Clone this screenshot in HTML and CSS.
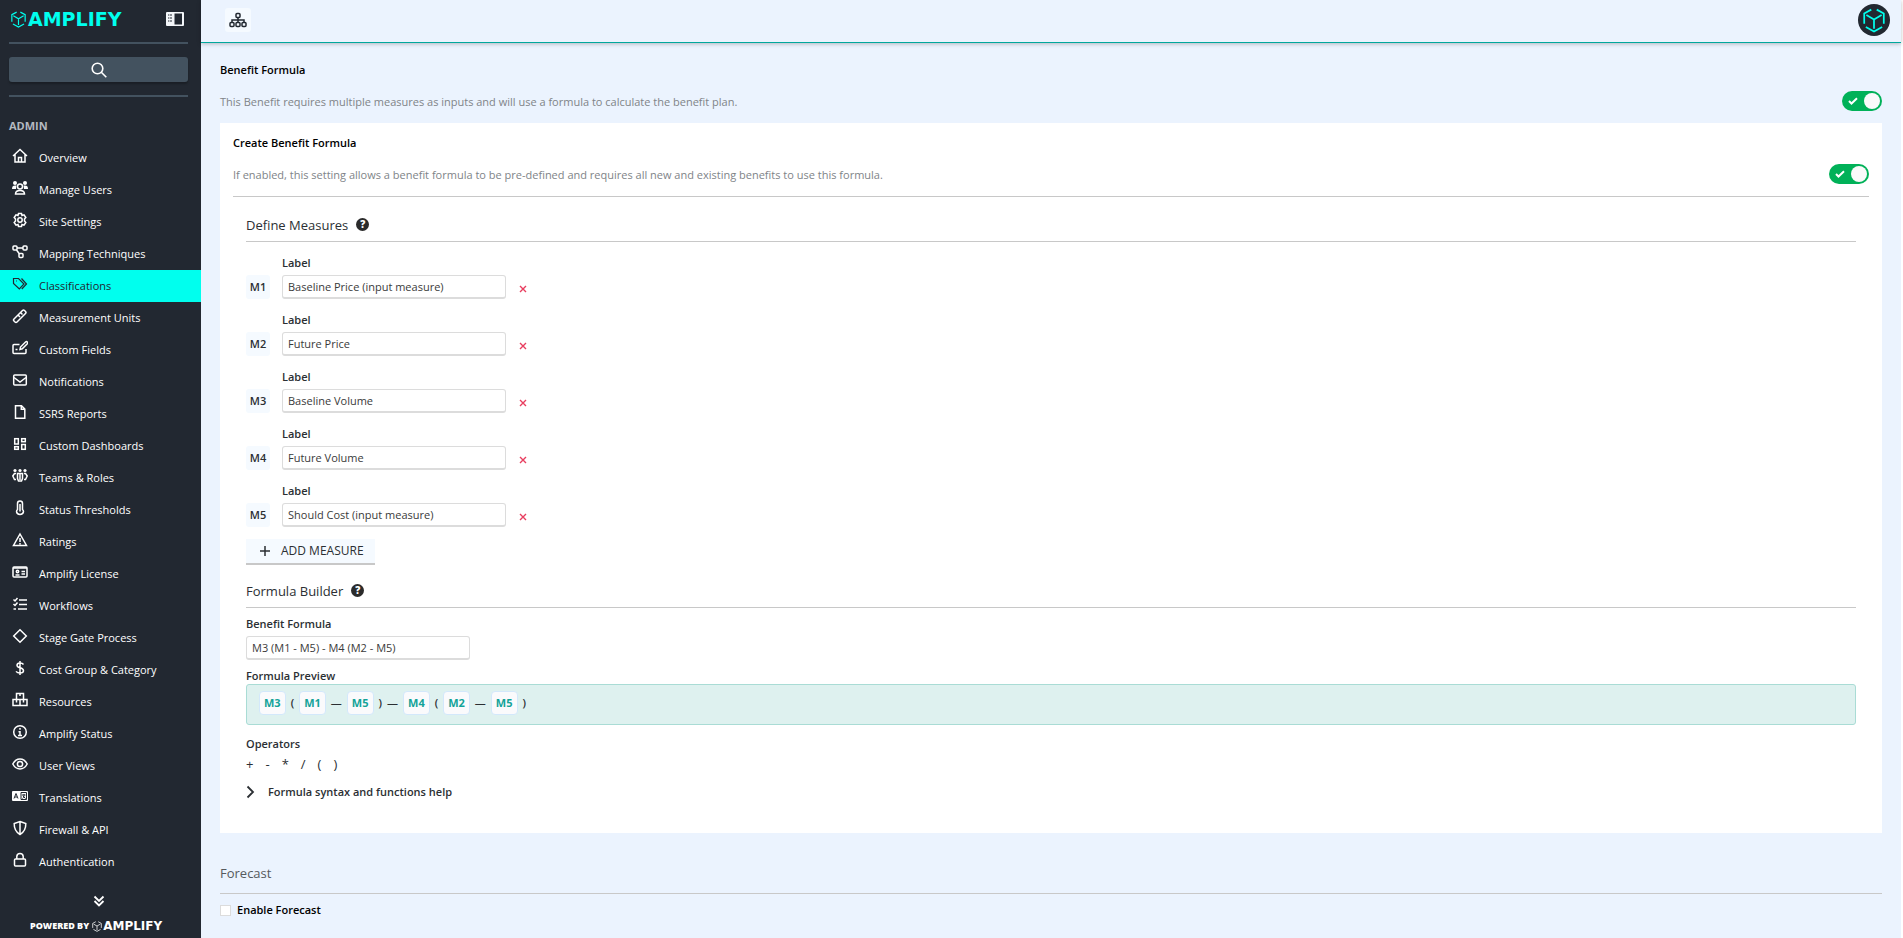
FILE: index.html
```html
<!DOCTYPE html>
<html lang="en">
<head>
  <meta charset="UTF-8">
  <meta name="viewport" content="width=device-width, initial-scale=1.0">
  <title>Amplify - Classifications</title>
  <link rel="stylesheet" href="styles.css">
</head>
<body>
  <!-- Shared cube logo -->
  <svg class="sprite" width="0" height="0" aria-hidden="true">
    <symbol id="cube" viewBox="2 1 20 23">
      <path d="M9.500 2.500L3 6v9.500M14.500 2.500L21 6v9.500M4.500 18.500L12 22.700l7.500-4.200M5 7.500l7 4 7-4M12 11.500V20" fill="none" stroke="currentColor" stroke-width="1.600"/>
    </symbol>
  </svg>

  <!-- Sidebar -->
  <aside class="sidebar">
    <div class="brand">
      <a href="#" class="logo"><svg class="logo-cube"><use href="#cube"/></svg>AMPLIFY</a>
      <button class="collapse" aria-label="Collapse menu">
        <svg width="18" height="14" viewBox="0 0 18 14"><rect width="18" height="14" rx="1" fill="#f4f7fa"/><rect x="8.500" y="1.500" width="7.500" height="11" fill="#222831"/><path d="M2 3h4M2 6h4M2 9h4" stroke="#222831" stroke-width="1.200" stroke-dasharray="1 .6 3"/></svg>
      </button>
    </div>
    <hr class="side-rule">
    <button class="search" aria-label="Search">
      <svg width="16" height="16" viewBox="0 0 16 16"><circle cx="6.500" cy="6.500" r="5.300"/><path d="M10.300 10.300l5 5"/></svg>
    </button>
    <hr class="side-rule">
    <h2 class="side-title">ADMIN</h2>
    <nav class="menu">
      <a href="#"><svg viewBox="0 0 16 16"><path d="M1 8l7-6.500L15 8M3 6.500V14h10V6.500M6.500 14v-4.500h3V14"/></svg>Overview</a>
      <a href="#"><svg viewBox="0 0 16 16"><g class="solid"><circle cx="3" cy="3" r="2"/><circle cx="13" cy="3" r="2"/><path d="M0 9c0-2.500 1-3.500 3-3.500h1.500L4 9zM16 9c0-2.500-1-3.500-3-3.500h-1.500L12 9z"/></g><circle cx="8" cy="6.500" r="2.500"/><path d="M3.500 14c0-2.500 1.500-3.500 4.500-3.500s4.500 1 4.500 3.500z"/></svg>Manage Users</a>
      <a href="#"><svg viewBox="0 0 16 16"><path d="M6.500 1.500h3l.5 2 2-.6 1.800 2.600L12.500 7v2l1.300 1.500L12 13.100l-2-.6-.5 2h-3l-.5-2-2 .6-1.800-2.600L3.500 9V7L2.200 5.500 4 2.900l2 .6z"/><circle cx="8" cy="8" r="2.200"/></svg>Site Settings</a>
      <a href="#"><svg viewBox="0 0 16 16"><rect x="1" y="2" width="4" height="4" rx="1"/><rect x="11" y="2" width="4" height="4" rx="1"/><rect x="7" y="9.500" width="4" height="4" rx="1"/><path d="M5 4h6M4.500 6l3 4"/></svg>Mapping Techniques</a>
      <a href="#" class="active"><svg viewBox="0 0 16 16"><path d="M1.500 2.500h5L12 8l-4.700 5L1.500 7.500zM9.500 2.500l5 5.500-4.700 5"/><path d="M4 5h.8"/></svg>Classifications</a>
      <a href="#"><svg viewBox="0 0 16 16"><path d="M2 11l8.500-8.500q1-1 2 0l1 1q1 1 0 2L5 14q-1 1-2 0l-1-1q-1-1 0-2zM6.500 7.500L8 9M9 5l1.500 1.500"/></svg>Measurement Units</a>
      <a href="#"><svg viewBox="0 0 16 16"><path d="M7.500 4.500H2q-1 0-1 1v7q0 1 1 1h11q1 0 1-1V9M8 9.500L8.500 7l5-5q1-.8 1.800 0t0 1.800l-5 5zM3.500 9.500h2"/></svg>Custom Fields</a>
      <a href="#"><svg viewBox="0 0 16 16"><rect x="1.700" y="3" width="12.600" height="10" rx="1"/><path d="M2 5.500l6 4.500 6-4.500"/></svg>Notifications</a>
      <a href="#"><svg viewBox="0 0 16 16"><path d="M3.500 1.700h6l3.300 3.300v9.300H3.500zM9.300 2v3.300h3.300"/></svg>SSRS Reports</a>
      <a href="#"><svg viewBox="0 0 16 16"><rect x="2.700" y="2.700" width="3.600" height="5.300"/><rect x="9.700" y="2.700" width="3.600" height="3"/><rect x="2.700" y="10.700" width="3.600" height="2.600"/><rect x="9.700" y="8.500" width="3.600" height="4.800"/></svg>Custom Dashboards</a>
      <a href="#"><svg viewBox="0 0 16 16"><g class="solid"><circle cx="3" cy="2.500" r="1.600"/><circle cx="8" cy="2.500" r="1.600"/><circle cx="13" cy="2.500" r="1.600"/></g><path d="M4 5.500H2.500L.8 8l1.700 3.500H4M12 5.500h1.500L15.200 8l-1.700 3.500H12M5.500 5.500h5v5l-1 2.500h-3l-1-2.500zM8 6v6"/></svg>Teams &amp; Roles</a>
      <a href="#"><svg viewBox="0 0 16 16"><path d="M5.500 9.500v-6q0-2.500 2.500-2.500t2.500 2.500v6q1 1 1 2.200-.3 2.800-3.500 2.800t-3.500-2.800q0-1.200 1-2.200zM8 4v7.500"/></svg>Status Thresholds</a>
      <a href="#"><svg viewBox="0 0 16 16"><path d="M8 2l6.500 11.500h-13zM8 6v4M8 11v1.500"/></svg>Ratings</a>
      <a href="#"><svg viewBox="0 0 16 16"><rect x="1" y="3" width="14" height="10" rx="1"/><path d="M1 4h14M9.500 7.500h3.500M9.500 10h3.500M3.500 11h4"/><circle cx="5.500" cy="7.500" r="1.200"/></svg>Amplify License</a>
      <a href="#"><svg viewBox="0 0 16 16"><path d="M1.500 3.500L3 5l2.500-3M1.500 8L3 9.500l2.500-3M7 4h8M7 8.500h8M6 13h9M1.500 13H4"/></svg>Workflows</a>
      <a href="#"><svg viewBox="0 0 16 16"><path d="M8 1.700L14.300 8 8 14.300 1.700 8z"/></svg>Stage Gate Process</a>
      <a href="#"><svg viewBox="0 0 16 16"><path d="M8 1v14M11.500 4.500q-1-1.500-3.500-1.500-3 0-3 2.300 0 1.700 3 2.500 3.500.8 3.500 2.900Q11.500 13 8 13q-2.700 0-4-1.600"/></svg>Cost Group &amp; Category</a>
      <a href="#"><svg viewBox="0 0 16 16"><path d="M4.500 1.500h7v6h-7zM1 7.500h7v6H1zM8 7.500h7v6H8zM8 1.500V4M4.500 8v2.500M11.500 8v2.500"/></svg>Resources</a>
      <a href="#"><svg viewBox="0 0 16 16"><circle cx="8" cy="8" r="6.300"/><path d="M8 4v1.800M6.500 7.700H8v3.500M6 11.500h4"/></svg>Amplify Status</a>
      <a href="#"><svg viewBox="0 0 16 16"><path d="M.8 8Q3.500 3 8 3t7.200 5Q12.500 13 8 13T.8 8z"/><circle cx="8" cy="8" r="2.600"/></svg>User Views</a>
      <a href="#"><svg viewBox="0 0 16 16"><rect x="0" y="3" width="16" height="10" rx="1" class="solid"/><path class="cut" d="M2 10.500l2-5 2 5M3 9h2M9 4.500h5.500v7H9zM10 7h3.500M12 6v1.500q0 2-1.500 3M11 8l2.500 2.500"/></svg>Translations</a>
      <a href="#"><svg viewBox="0 0 16 16"><path d="M8 1.500l5.800 2Q14 11 8 14.500 2 11 2.200 3.500zM8 2v12"/></svg>Firewall &amp; API</a>
      <a href="#"><svg viewBox="0 0 16 16"><rect x="2.500" y="7" width="11" height="7" rx="1"/><path d="M4.800 7V4.500Q5 1.500 8 1.500t3.200 3V7"/></svg>Authentication</a>
    </nav>
    <button class="more" aria-label="Show more">
      <svg width="12" height="12" viewBox="0 0 12 12"><path d="M1.500 1.500L6 6l4.500-4.500M1.500 6L6 10.500 10.500 6"/></svg>
    </button>
    <div class="powered">POWERED BY <svg><use href="#cube"/></svg><span>AMPLIFY</span></div>
  </aside>

  <!-- Page -->
  <div class="page">
    <header class="topbar">
      <button class="tree" aria-label="Hierarchy">
        <svg width="18" height="16" viewBox="0 0 18 16"><rect x="7" y="1.500" width="4" height="4" rx="1"/><rect x="1" y="10.500" width="4" height="4" rx="1"/><rect x="7" y="10.500" width="4" height="4" rx="1"/><rect x="13" y="10.500" width="4" height="4" rx="1"/><path d="M9 5.500v5M3 10.500V8h12v2.500"/></svg>
      </button>
      <button class="avatar" aria-label="Account"><svg><use href="#cube"/></svg></button>
    </header>

    <main class="content">
      <h1 class="title">Benefit Formula</h1>
      <div class="setting">
        <label for="multi">This Benefit requires multiple measures as inputs and will use a formula to calculate the benefit plan.</label>
        <span class="switch"><input type="checkbox" id="multi" checked><svg viewBox="0 0 10 8"><path d="M1 4l2.500 2.500L9 1.300"/></svg></span>
      </div>

      <section class="panel">
        <h2 class="title">Create Benefit Formula</h2>
        <div class="setting ruled">
          <label for="predefine">If enabled, this setting allows a benefit formula to be pre-defined and requires all new and existing benefits to use this formula.</label>
          <span class="switch"><input type="checkbox" id="predefine" checked><svg viewBox="0 0 10 8"><path d="M1 4l2.500 2.500L9 1.300"/></svg></span>
        </div>

        <div class="inner">
          <!-- Measures -->
          <h3 class="heading">Define Measures <button class="help" aria-label="Help">?</button></h3>
          <div class="measures">
            <div class="measure">
              <span class="chip">M1</span>
              <div class="field"><label for="m1">Label</label><input type="text" id="m1" value="Baseline Price (input measure)"></div>
              <button class="remove" aria-label="Remove M1"><svg viewBox="0 0 8 8"><path d="M1 1l6 6M7 1L1 7"/></svg></button>
            </div>
            <div class="measure">
              <span class="chip">M2</span>
              <div class="field"><label for="m2">Label</label><input type="text" id="m2" value="Future Price"></div>
              <button class="remove" aria-label="Remove M2"><svg viewBox="0 0 8 8"><path d="M1 1l6 6M7 1L1 7"/></svg></button>
            </div>
            <div class="measure">
              <span class="chip">M3</span>
              <div class="field"><label for="m3">Label</label><input type="text" id="m3" value="Baseline Volume"></div>
              <button class="remove" aria-label="Remove M3"><svg viewBox="0 0 8 8"><path d="M1 1l6 6M7 1L1 7"/></svg></button>
            </div>
            <div class="measure">
              <span class="chip">M4</span>
              <div class="field"><label for="m4">Label</label><input type="text" id="m4" value="Future Volume"></div>
              <button class="remove" aria-label="Remove M4"><svg viewBox="0 0 8 8"><path d="M1 1l6 6M7 1L1 7"/></svg></button>
            </div>
            <div class="measure">
              <span class="chip">M5</span>
              <div class="field"><label for="m5">Label</label><input type="text" id="m5" value="Should Cost (input measure)"></div>
              <button class="remove" aria-label="Remove M5"><svg viewBox="0 0 8 8"><path d="M1 1l6 6M7 1L1 7"/></svg></button>
            </div>
          </div>
          <button class="add"><svg width="12" height="12" viewBox="0 0 12 12"><path d="M6 1v10M1 6h10"/></svg>ADD MEASURE</button>

          <!-- Formula -->
          <h3 class="heading">Formula Builder <button class="help" aria-label="Help">?</button></h3>
          <div class="field formula">
            <label for="formula">Benefit Formula</label>
            <input type="text" id="formula" value="M3 (M1 - M5) - M4 (M2 - M5)">
          </div>
          <div class="caption preview-caption">Formula Preview</div>
          <div class="preview">
            <b>M3</b><span>(</span><b>M1</b><span>—</span><b>M5</b><span>)</span><span>—</span><b>M4</b><span>(</span><b>M2</b><span>—</span><b>M5</b><span>)</span>
          </div>
          <div class="caption operators-caption">Operators</div>
          <div class="operators"><button>+</button><button>-</button><button>*</button><button>/</button><button>(</button><button>)</button></div>
          <button class="syntax"><svg width="9" height="14" viewBox="0 0 9 14"><path d="M1.500 1.500L7 7l-5.500 5.500"/></svg>Formula syntax and functions help</button>
        </div>
      </section>

      <!-- Forecast -->
      <h2 class="forecast">Forecast</h2>
      <label class="enable"><input type="checkbox"> Enable Forecast</label>
    </main>
  </div>
</body>
</html>
```
FILE: styles.css
```css
* {
  box-sizing: border-box;
}
body {
  margin: 0;
  display: flex;
  min-height: 100vh;
  background: #fff;
  color: #2b2f33;
  font-family: "Open Sans", "Noto Sans", sans-serif;
  font-size: 11px;
  line-height: 16px;
}
h1, h2, h3, hr {
  margin: 0;
}
button {
  padding: 0;
  border: 0;
  background: none;
  color: inherit;
  font: inherit;
  cursor: pointer;
}
input {
  margin: 0;
  font: inherit;
}
svg {
  flex: none;
  fill: none;
  stroke: currentColor;
}
.sprite {
  position: absolute;
}

/* Sidebar */
.sidebar {
  flex: none;
  display: flex;
  flex-direction: column;
  width: 201px;
  background: #222831;
  color: #fff;
}
.brand {
  display: flex;
  align-items: center;
  justify-content: space-between;
  height: 42px;
  padding: 0 17px 4px 11px;
}
.logo {
  display: flex;
  align-items: center;
  gap: 2px;
  color: #00ffee;
  font: bold 19px/20px "DejaVu Sans", sans-serif;
  text-decoration: none;
}
.logo-cube {
  width: 15px;
  height: 17px;
}
.collapse {
  display: flex;
}
.collapse svg {
  stroke: none;
}
.side-rule {
  height: 2px;
  margin: 0 13px 0 9px;
  border: 0;
  background: #43525f;
}
.search {
  display: flex;
  align-items: center;
  justify-content: center;
  height: 25px;
  margin: 13px 13px 13px 9px;
  border-radius: 3px;
  background: #43525f;
  box-shadow: 0 2px 2px rgba(0, 0, 0, 0.25);
}
.search svg {
  stroke-width: 1.6;
}
.side-title {
  padding: 13px 9px 0;
  color: #b4b9c0;
  font-size: 11px;
  font-weight: 700;
  line-height: 32px;
}
.menu a {
  display: flex;
  align-items: center;
  gap: 11px;
  height: 32px;
  padding-left: 12px;
  color: #fff;
  font-weight: 500;
  text-decoration: none;
}
.menu svg {
  width: 16px;
  height: 16px;
  margin-bottom: 4px;
  stroke-width: 1.5;
}
.menu .solid {
  fill: currentColor;
  stroke: none;
}
.menu .cut {
  stroke: #222831;
  stroke-width: 1;
}
.menu a.active {
  background: #00ffee;
  color: #222831;
}
.menu a.active svg {
  stroke-width: 1.2;
}
.more {
  display: flex;
  justify-content: center;
  margin: 17px 13px 0 9px;
}
.more svg {
  stroke-width: 1.8;
}
.powered {
  display: flex;
  align-items: center;
  margin: 11px 0 0 30px;
  font-size: 9px;
  font-weight: 800;
  white-space: nowrap;
}
.powered svg {
  width: 10px;
  height: 11px;
  margin: 0 1px 0 3px;
}
.powered span {
  font: bold 12px/16px "DejaVu Sans", sans-serif;
}

/* Top bar */
.page {
  flex: 1;
  min-width: 0;
  margin-right: 2px;
  background: #ebf3fe;
}
.topbar {
  display: flex;
  align-items: center;
  justify-content: space-between;
  height: 43px;
  padding: 0 11px 2px 24px;
  border-bottom: 1px solid #00a79d;
  box-shadow: 0 1px 4px rgba(0, 0, 0, 0.25);
}
.tree {
  display: flex;
  align-items: center;
  justify-content: center;
  width: 26px;
  height: 24px;
  border-radius: 3px;
  background: #f5faff;
  color: #222831;
}
.tree svg {
  stroke-width: 1.5;
}
.avatar {
  display: flex;
  align-items: center;
  justify-content: center;
  width: 32px;
  height: 32px;
  border-radius: 50%;
  background: #222831;
  color: #00ffee;
}
.avatar svg {
  width: 24px;
  height: 25px;
}

/* Settings */
.content {
  padding: 17px 19px 0;
}
.title {
  color: #000;
  font-size: 11px;
  font-weight: 600;
  line-height: 20px;
}
.setting {
  display: flex;
  align-items: center;
  justify-content: space-between;
  margin-top: 11px;
  color: #808488;
}
.setting label {
  padding-top: 2px;
}
.ruled {
  padding-bottom: 12px;
  border-bottom: 1px solid #c8c8c8;
}
.switch {
  position: relative;
  display: flex;
}
.switch input {
  appearance: none;
  width: 40px;
  height: 20px;
  border-radius: 10px;
  background: #00b158;
}
.switch input::after {
  content: "";
  display: block;
  width: 16px;
  height: 16px;
  margin: 2px 2px 2px 22px;
  border-radius: 50%;
  background: #fafafa;
}
.switch svg {
  position: absolute;
  left: 6px;
  top: 6px;
  width: 10px;
  height: 8px;
  stroke: #fff;
  stroke-width: 2;
  pointer-events: none;
}
.panel {
  margin-top: 12px;
  padding: 10px 13px 33px;
  background: #fff;
}
.inner {
  padding: 18px 13px 0;
}
.heading {
  display: flex;
  align-items: center;
  gap: 8px;
  padding-bottom: 6px;
  border-bottom: 1px solid #c8c8c8;
  font-size: 13px;
  font-weight: 400;
  line-height: 20px;
}
.help {
  width: 13px;
  height: 13px;
  margin-bottom: 2px;
  border-radius: 50%;
  background: #2b2b2b;
  color: #fff;
  font-size: 10px;
  font-weight: 800;
  line-height: 13px;
}

/* Measures */
.measures {
  display: grid;
  gap: 13px;
  margin-top: 13px;
}
.measure {
  display: flex;
  align-items: flex-end;
}
.chip {
  width: 24px;
  height: 24px;
  margin-right: 12px;
  border-radius: 3px;
  background: #f5faff;
  font-weight: 600;
  line-height: 24px;
  text-align: center;
}
.field {
  display: flex;
  flex-direction: column;
  gap: 4px;
  width: 224px;
}
.field label, .caption {
  font-weight: 600;
}
.field input {
  height: 24px;
  padding: 0 5px;
  border: 1px solid #dcdcdc;
  border-bottom-width: 2px;
  border-radius: 3px;
  background: #fff;
  color: #3a3a3a;
}
.remove {
  display: flex;
  margin: 0 0 6px 13px;
  color: #e83e5f;
}
.remove svg {
  width: 8px;
  height: 8px;
  stroke-width: 1.4;
}
.add {
  display: flex;
  align-items: center;
  gap: 10px;
  height: 26px;
  margin: 12px 0 16px;
  padding: 0 11px 0 13px;
  border-bottom: 2px solid #c8c8c8;
  background: #f5faff;
  font-size: 12px;
}
.add svg {
  stroke-width: 1.5;
}

/* Formula */
.formula {
  margin-top: 8px;
}
.preview-caption {
  margin-top: 8px;
}
.preview {
  display: flex;
  align-items: center;
  gap: 5px;
  height: 41px;
  padding: 0 12px 3px;
  border: 1px solid #a9dcd5;
  border-radius: 3px;
  background: #def1ef;
  font-weight: 600;
}
.preview b {
  height: 24px;
  padding: 0 4px;
  border: 1px solid #d3e8fb;
  border-radius: 4px;
  background: #fafafc;
  color: #14a399;
  font-weight: 700;
  line-height: 22px;
}
.operators-caption {
  margin-top: 11px;
}
.operators {
  display: flex;
  gap: 12px;
  margin-top: 4px;
  font-size: 13px;
}
.syntax {
  display: flex;
  align-items: center;
  gap: 13px;
  margin-top: 12px;
  font-weight: 600;
}
.syntax svg {
  stroke-width: 1.8;
}

/* Forecast */
.forecast {
  margin-top: 30px;
  padding-bottom: 10px;
  border-bottom: 1px solid #c8c8c8;
  color: #55595d;
  font-size: 13px;
  font-weight: 400;
  line-height: 20px;
}
.enable {
  display: inline-flex;
  align-items: center;
  gap: 6px;
  margin-top: 6px;
  color: #000;
  font-weight: 600;
  line-height: 20px;
}
.enable input {
  appearance: none;
  width: 11px;
  height: 11px;
  border: 1px solid #dcdcdc;
  background: #fff;
}
```
